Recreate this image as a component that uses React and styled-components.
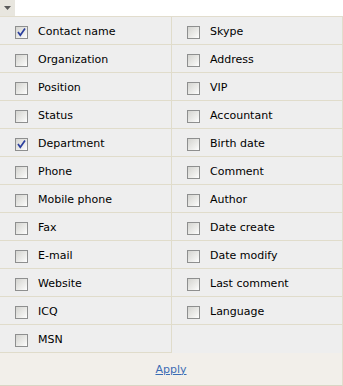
import React, { useState } from 'react';
import styled, { createGlobalStyle } from 'styled-components';

const LEFT = [
    ['Contact name', true],
    ['Organization', false],
    ['Position', false],
    ['Status', false],
    ['Department', true],
    ['Phone', false],
    ['Mobile phone', false],
    ['Fax', false],
    ['E-mail', false],
    ['Website', false],
    ['ICQ', false],
    ['MSN', false],
];

const RIGHT = [
    ['Skype', false],
    ['Address', false],
    ['VIP', false],
    ['Accountant', false],
    ['Birth date', false],
    ['Comment', false],
    ['Author', false],
    ['Date create', false],
    ['Date modify', false],
    ['Last comment', false],
    ['Language', false],
];

const Check = ({ checked }) => (
    <Box $checked={checked}>
        {checked && (
            <svg width="11" height="11" viewBox="0 0 11 11">
                <path d="M2 5 L4.3 8.3 L9 1.5" fill="none" stroke="#2b3f9e" strokeWidth="1.7" />
            </svg>
        )}
    </Box>
);

const Column = ({ items, divided, onToggle, side }) => (
    <Col $divided={divided}>
        {items.map(([label, checked], i) => (
            <Row key={label} onClick={() => onToggle(side, i)}>
                <Check checked={checked} />
                <Label>{label}</Label>
            </Row>
        ))}
    </Col>
);

const App = () => {
    const [cols, setCols] = useState({ left: LEFT, right: RIGHT });

    const toggle = (side, i) => {
        setCols(prev => ({
            ...prev,
            [side]: prev[side].map((it, j) => (j === i ? [it[0], !it[1]] : it)),
        }));
    };

    return (
        <>
            <GlobalStyle />
            <Toggle>
                <svg width="7" height="4" viewBox="0 0 7 4">
                    <path d="M0 0 H7 L3.5 4 Z" fill="#5a5a5a" />
                </svg>
            </Toggle>
            <Panel>
                <Grid>
                    <Column items={cols.left} divided side="left" onToggle={toggle} />
                    <Column items={cols.right} side="right" onToggle={toggle} />
                </Grid>
                <Footer>
                    <ApplyLink href="#" onClick={e => e.preventDefault()}>Apply</ApplyLink>
                </Footer>
            </Panel>
        </>
    );
};

export default App;

const GlobalStyle = createGlobalStyle`
    body {
        margin: 0;
        padding: 0;
        background: #fff;
        font-family: 'DejaVu Sans', Verdana, sans-serif;
    }
`;

const Toggle = styled.div`
    width: 15px;
    height: 16px;
    background: #e8e6df;
    display: flex;
    align-items: center;
    justify-content: center;
    box-sizing: border-box;
    padding-bottom: 1px;
`;

const Panel = styled.div`
    width: 343px;
    box-sizing: border-box;
    border-top: 1px solid #e2ddcd;
    border-right: 1px solid #e2ddcd;
    border-bottom: 1px solid #d9d5c4;
`;

const Grid = styled.div`
    display: flex;
    background: #eeeeee;
`;

const Col = styled.div`
    width: ${p => (p.$divided ? '172px' : '170px')};
    box-sizing: border-box;
    border-right: ${p => (p.$divided ? '1px solid #e0dccb' : 'none')};
    display: flex;
    flex-direction: column;
`;

const Row = styled.div`
    height: 28px;
    box-sizing: border-box;
    border-bottom: 1px solid #e0dccb;
    display: flex;
    align-items: center;
    padding: 4px 0 0 15px;
    cursor: default;
`;

const Box = styled.span`
    width: 13px;
    height: 13px;
    box-sizing: border-box;
    border: 1px solid #8e8f8f;
    background: linear-gradient(135deg, #d4d4d0 0%, #f0f0ee 70%, #ffffff 100%);
    display: flex;
    align-items: center;
    justify-content: center;
    margin-right: 10px;
    flex-shrink: 0;
`;

const Label = styled.span`
    font-size: 11px;
    color: #000;
    line-height: 14px;
    margin-top: -1px;
`;

const Footer = styled.div`
    height: 32px;
    background: #f2efea;
    display: flex;
    align-items: center;
    justify-content: center;
`;

const ApplyLink = styled.a`
    font-size: 11px;
    color: #3b6cb4;
    text-decoration: underline;
`;
